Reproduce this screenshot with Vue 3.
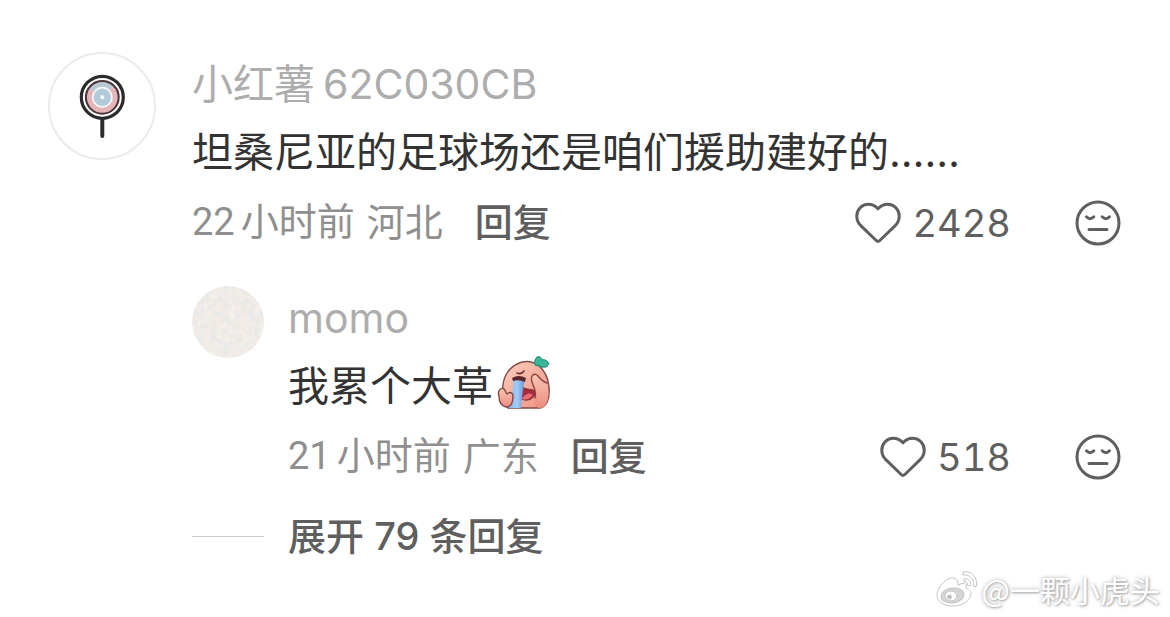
<script setup>
const comment = {
  nameParts: ['小红薯', '62C030CB'],
  text: '坦桑尼亚的足球场还是咱们援助建好的……',
  hours: 22,
  place: '河北',
  likes: 2428,
}
const reply = {
  name: 'momo',
  text: '我累个大草',
  hours: 21,
  place: '广东',
  likes: 518,
}
</script>

<template>
  <main class="thread">
    <article class="comment">
      <svg class="avatar" viewBox="0 0 108 108" aria-hidden="true">
        <circle cx="54" cy="54" r="53" fill="#fff" stroke="#ebebeb" stroke-width="2" />
        <path d="M54.3 67V84" stroke="#2b2b2d" stroke-width="4" stroke-linecap="round" />
        <circle cx="54.3" cy="45.3" r="21" fill="#fff" stroke="#2b2b2d" stroke-width="3.2" />
        <circle cx="54.3" cy="45.3" r="16.4" fill="#e6b5ba" />
        <path d="M54.3 45.3L41 37A16.4 16.4 0 0 1 66 34Z" fill="#b9c9d4" />
        <circle cx="54.3" cy="45.3" r="16.4" fill="none" stroke="#4b3438" stroke-width="2" />
        <circle cx="54.3" cy="45.3" r="9.6" fill="#b2cbd9" stroke="#f5f8fa" stroke-width="1.8" />
        <circle cx="54.3" cy="45.3" r="2" fill="#fff" />
      </svg>
      <div class="body">
        <h2 class="name"><span v-for="part in comment.nameParts" :key="part">{{ part }}</span></h2>
        <p class="text">{{ comment.text }}</p>
        <footer class="meta">
          <span class="time"><span>{{ comment.hours }}</span><span>小时前</span></span>
          <span class="place">{{ comment.place }}</span>
          <button class="answer" type="button">回复</button>
          <button class="like" type="button" aria-label="赞">
            <svg class="heart" viewBox="0 0 48 46" aria-hidden="true">
              <path d="M24 8.8C21.2 5.8 17.8 4.3 14.3 4.3C7.8 4.3 2.8 9.6 2.8 16.2C2.8 20 4.2 23 6.8 25.6L22.2 40.5Q24 42.2 25.8 40.5L41.2 25.6C43.8 23 45.2 20 45.2 16.2C45.2 9.6 40.2 4.3 33.7 4.3C30.2 4.3 26.8 5.8 24 8.8Z" />
            </svg>
            <span>{{ comment.likes }}</span>
          </button>
          <button class="dislike" type="button" aria-label="不喜欢">
            <svg class="face" viewBox="0 0 46 46" aria-hidden="true">
              <circle cx="23" cy="23" r="21" />
              <path d="M11.5 16.8Q15 20.5 18.8 16.8M27.2 16.8Q31 20.5 34.5 16.8M14 29.5H32" />
            </svg>
          </button>
        </footer>

        <section class="replies">
          <article class="reply">
            <svg class="avatar-small" viewBox="0 0 72 72" aria-hidden="true">
              <defs>
                <clipPath id="round"><circle cx="36" cy="36" r="36" /></clipPath>
                <filter id="grain" x="0" y="0" width="100%" height="100%">
                  <feTurbulence type="fractalNoise" baseFrequency="0.16" numOctaves="3" seed="4" />
                  <feColorMatrix values="0.16 0 0 0 0.82  0.06 0.08 0 0 0.82  0 0.06 0.1 0 0.79  0 0 0 0 1" color-interpolation-filters="sRGB" />
                </filter>
              </defs>
              <g clip-path="url(#round)"><rect width="72" height="72" fill="#e9e7e3" filter="url(#grain)" /></g>
            </svg>
            <div class="body">
              <h3 class="name">{{ reply.name }}</h3>
              <p class="text">
                <span>{{ reply.text }}</span>
                <svg class="emoji" viewBox="0 0 54 54" role="img" aria-label="哭">
                  <defs>
                    <linearGradient id="skin" x1="0" y1="0" x2="1" y2="1">
                      <stop offset="0" stop-color="#fbd0bc" />
                      <stop offset="1" stop-color="#ee9083" />
                    </linearGradient>
                    <linearGradient id="palm" x1="0" y1="0" x2="0" y2="1">
                      <stop offset="0" stop-color="#fac6b4" />
                      <stop offset="1" stop-color="#ec8c80" />
                    </linearGradient>
                    <linearGradient id="tear" x1="0" y1="0" x2="1" y2="0">
                      <stop offset="0" stop-color="#86b4ee" />
                      <stop offset="0.5" stop-color="#a3ccf6" />
                      <stop offset="1" stop-color="#5f94dc" />
                    </linearGradient>
                  </defs>
                  <path d="M9 50C4 38 5 25 10 17C15 9 25 4 34 6C44 8 51 19 52 31C53 42 50 51 43 52H11Z" fill="url(#skin)" stroke="#854747" stroke-width="1.4" />
                  <path d="M38 9C37 6 38 3 40 1C43 0 45 2 45 4C48 3 51 5 52 8C50 12 46 12 42 10Z" fill="#38b79a" stroke="#24816f" stroke-width="1" />
                  <path d="M20 17Q24 19 27 15" fill="none" stroke="#6b2f36" stroke-width="1.6" stroke-linecap="round" />
                  <path d="M25 31C30 34 35 33 39 35C38 43 31 46 24 43Z" fill="#a72b3d" stroke="#81303a" stroke-width="1" />
                  <path d="M26 41Q32 35 36 39Q31 45 25 43Z" fill="#e86d70" />
                  <path d="M16 23H28C26 31 25 41 24 52H12C14 42 17 34 16 23Z" fill="url(#tear)" />
                  <path d="M15 22Q22 18 29 22L28 26Q22 23 16 25Z" fill="#5b262d" />
                  <path d="M44 52C38 52 36 47 38 42C40 37 37 32 35 26C33 20 37 16 41 20C44 24 47 26 50 27C53 39 51 51 44 52Z" fill="url(#palm)" />
                  <path d="M38 42C40 37 37 32 35 26C33 20 37 16 41 20C44 24 47 26 50 27" fill="none" stroke="#8c4444" stroke-width="1.4" stroke-linecap="round" />
                  <path d="M2 40C0 35 4 31 7 33C9 35 9 38 10 38C13 35 16 37 16 40C16 47 14 51 9 51C4 50 2 46 2 40Z" fill="url(#palm)" stroke="#854747" stroke-width="1.4" />
                </svg>
              </p>
              <footer class="meta">
                <span class="time"><span>{{ reply.hours }}</span><span>小时前</span></span>
                <span class="place">{{ reply.place }}</span>
                <button class="answer" type="button">回复</button>
                <button class="like" type="button" aria-label="赞">
                  <svg class="heart" viewBox="0 0 48 46" aria-hidden="true">
                    <path d="M24 8.8C21.2 5.8 17.8 4.3 14.3 4.3C7.8 4.3 2.8 9.6 2.8 16.2C2.8 20 4.2 23 6.8 25.6L22.2 40.5Q24 42.2 25.8 40.5L41.2 25.6C43.8 23 45.2 20 45.2 16.2C45.2 9.6 40.2 4.3 33.7 4.3C30.2 4.3 26.8 5.8 24 8.8Z" />
                  </svg>
                  <span>{{ reply.likes }}</span>
                </button>
                <button class="dislike" type="button" aria-label="不喜欢">
                  <svg class="face" viewBox="0 0 46 46" aria-hidden="true">
                    <circle cx="23" cy="23" r="21" />
                    <path d="M11.5 16.8Q15 20.5 18.8 16.8M27.2 16.8Q31 20.5 34.5 16.8M14 29.5H32" />
                  </svg>
                </button>
              </footer>
            </div>
          </article>
          <button class="expand" type="button">展开 79 条回复</button>
        </section>
      </div>
    </article>

    <div class="watermark">
      <svg class="weibo" viewBox="0 0 44 38" aria-hidden="true">
        <path d="M16 8C10 9 2 18 2 25C2 32 9 36 18 36C28 36 36 30 36 24C36 20 33 19 31 18C32 15 31 11 23 15C23 11 22 7 16 8Z" />
        <ellipse class="eye" cx="17.5" cy="25.5" rx="11.5" ry="7.5" transform="rotate(-8 17.5 25.5)" />
        <ellipse cx="16" cy="26" rx="6" ry="5" />
        <circle class="pupil" cx="14.5" cy="27" r="2" />
        <path d="M28 2C36 0 44 8 41 17L38 16C40 10 35 4 28 5ZM29 9C34 8 37 12 35 16L32 15C33 13 32 11 29 12Z" />
      </svg>
      <span>@一颗小虎头</span>
    </div>
  </main>
</template>

<style>
body {
  margin: 0;
  background: #fff;
}
</style>

<style scoped>
.thread {
  position: relative;
  box-sizing: border-box;
  min-height: 100vh;
  padding: 52px 49px 52px 48px;
  background: #fff;
  font-family: Inter, "Noto Sans CJK SC", sans-serif;
}
.comment {
  display: flex;
  gap: 36px;
}
.avatar {
  flex: none;
  width: 108px;
  height: 108px;
}
.body {
  flex: 1;
  min-width: 0;
  padding-top: 4px;
}
.name,
.text {
  display: flex;
  align-items: center;
  margin: 0;
  font-size: 41px;
  font-weight: 400;
  line-height: 56px;
}
.name {
  gap: 8px;
  color: #adadad;
}
.text {
  height: 56px;
  margin-top: 12px;
  color: #333;
}
.meta {
  display: flex;
  align-items: center;
  height: 60px;
  margin-top: 12px;
  font-size: 38px;
  line-height: 56px;
  color: #8f8f8f;
}
.time {
  display: flex;
  gap: 6px;
  font-family: Roboto, "Noto Sans CJK SC", sans-serif;
}
.place {
  margin-left: 12px;
}
button {
  padding: 0;
  border: 0;
  background: none;
  font: inherit;
  color: #5f5f5f;
  cursor: pointer;
}
.answer {
  margin-left: 32px;
  font-weight: 500;
}
.like {
  display: flex;
  align-items: center;
  gap: 10px;
  margin-left: auto;
  padding-top: 2px;
  font-variant-numeric: tabular-nums;
}
.dislike {
  display: flex;
  margin-left: 64px;
  padding-top: 2px;
}
.heart,
.face {
  fill: none;
  stroke: #5f5f5f;
  stroke-width: 3;
  stroke-linecap: round;
  stroke-linejoin: round;
}
.heart {
  width: 48px;
  height: 46px;
}
.face {
  width: 46px;
  height: 46px;
}
.replies {
  margin-top: 34px;
}
.reply {
  display: flex;
  gap: 24px;
}
.avatar-small {
  flex: none;
  width: 72px;
  height: 72px;
}
.emoji {
  width: 54px;
  height: 54px;
  margin: 0 0 6px 4px;
}
.expand {
  display: flex;
  align-items: center;
  gap: 24px;
  margin-top: 22px;
  font-size: 38px;
  font-weight: 500;
  line-height: 56px;
}
.expand::before {
  content: "";
  width: 72px;
  height: 1px;
  background: #ccc;
}
.watermark {
  position: absolute;
  right: 10px;
  bottom: 8px;
  display: flex;
  align-items: center;
  gap: 3px;
  font-family: "Noto Sans CJK SC", sans-serif;
  font-size: 30px;
  line-height: 40px;
  color: #fff;
  text-shadow: 0 0 4px #aaa, 1px 1px 2px #b4b4b4;
}
.weibo {
  width: 44px;
  height: 38px;
  fill: #fff;
  stroke: #c4c4c4;
  stroke-width: 1;
}
.eye {
  fill: #d6d6d6;
}
.pupil {
  fill: #bdbdbd;
}
</style>
